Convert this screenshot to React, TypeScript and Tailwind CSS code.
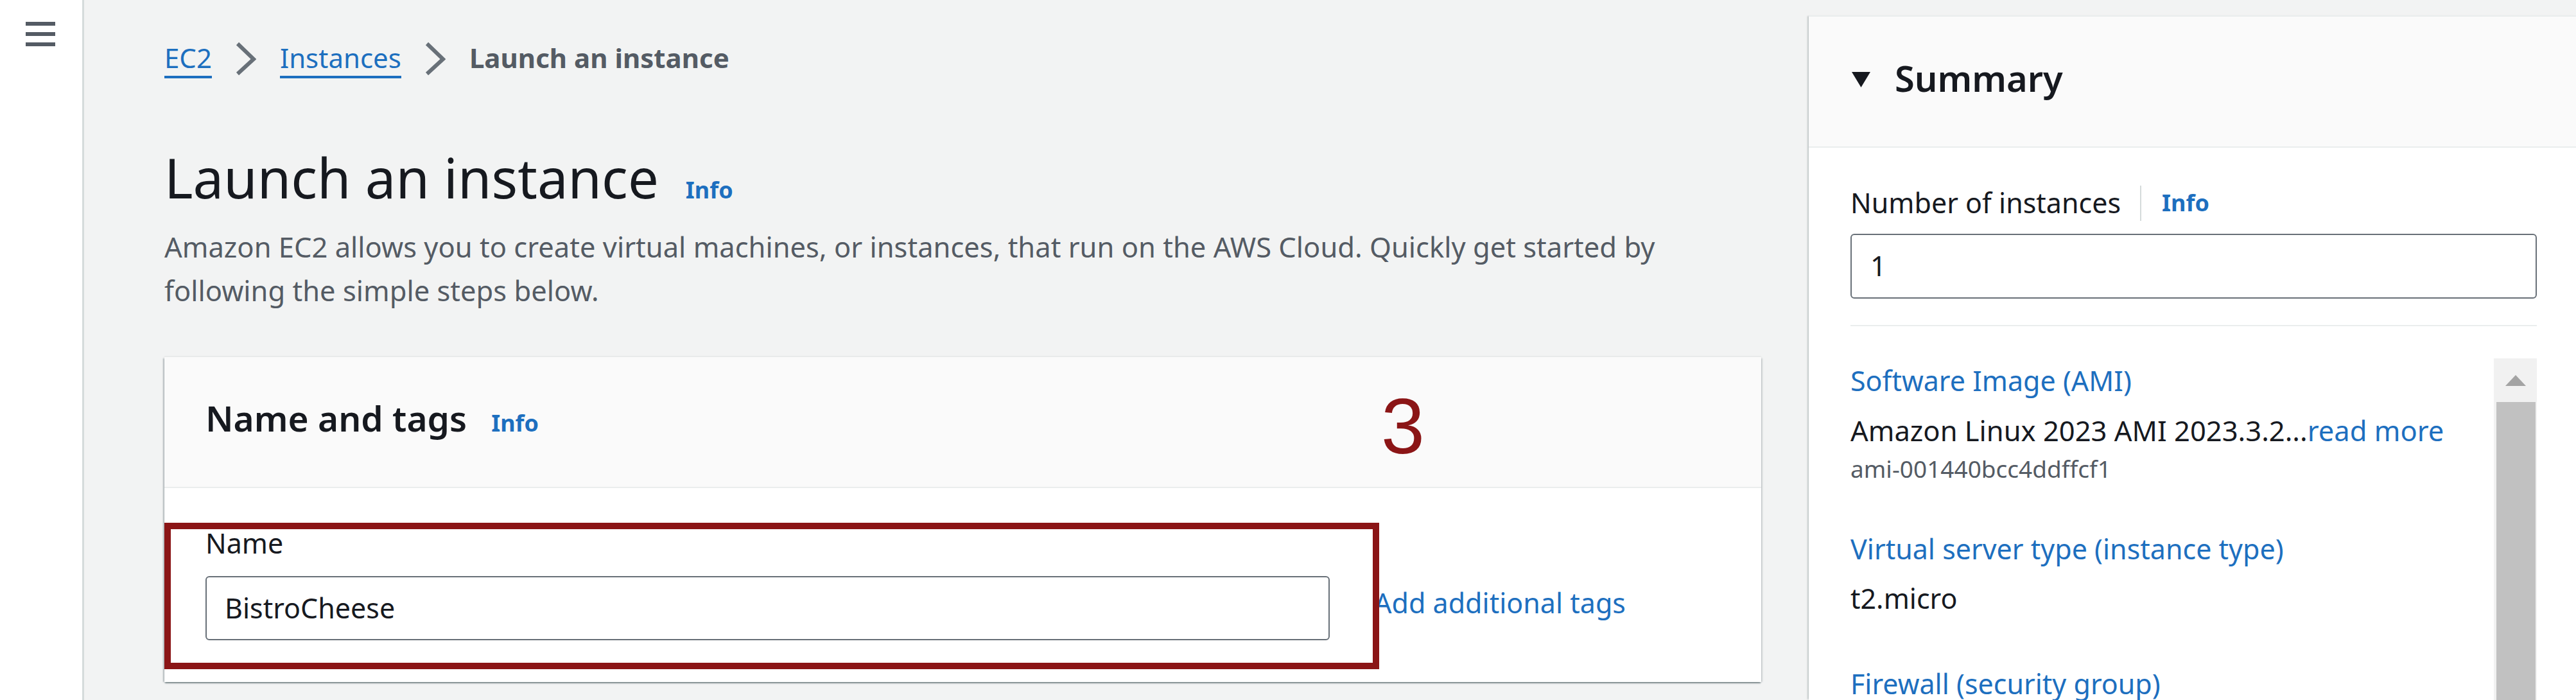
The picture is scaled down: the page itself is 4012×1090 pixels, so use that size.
import React from "react";

const BLUE = "text-[#1d6fbf]";

function Chevron() {
  return (
    <svg width="32" height="53" viewBox="0 0 32 53" className="mt-[3px] shrink-0">
      <polyline points="3,3 28,27 3,50" fill="none" stroke="#687078" strokeWidth="6" strokeLinejoin="miter" />
    </svg>
  );
}

export default function App() {
  return (
    <div className="flex w-[4012px] h-[1090px] overflow-hidden bg-[#f2f3f3] font-['Noto_Sans',sans-serif] text-[#16191f]">
      {/* Left nav */}
      <aside className="w-[131px] shrink-0 bg-white border-r-[3px] border-[#d5dbdb] pt-[34px] pl-[40px]">
        <div className="flex flex-col gap-[10px] w-[46px]">
          <div className="h-[6px] bg-[#545b64]" />
          <div className="h-[6px] bg-[#545b64]" />
          <div className="h-[6px] bg-[#545b64]" />
        </div>
      </aside>

      {/* Main column */}
      <main className="w-[2686px] shrink-0 pl-[125px]">
        <div className="w-[2487px]">
          {/* Breadcrumb */}
          <nav className="mt-[62px] h-[60px] flex items-start gap-[37px] text-[42px]">
            <span className={`leading-[56px] border-b-[4px] border-[#1d6fbf] ${BLUE}`}>EC2</span>
            <Chevron />
            <span className={`leading-[56px] border-b-[4px] border-[#1d6fbf] ${BLUE}`}>Instances</span>
            <Chevron />
            <span className="leading-[56px] font-bold text-[#545b64]">Launch an instance</span>
          </nav>

          {/* Heading */}
          <h1 className="mt-[104px] flex items-baseline">
            <span className="text-[85px] leading-[100px] font-normal text-[#16191f]">Launch an instance</span>
            <span className={`ml-[42px] text-[36px] font-bold ${BLUE}`}>Info</span>
          </h1>
          <p className="mt-[24px] text-[43.5px] leading-[68px] text-[#545b64]">
            Amazon EC2 allows you to create virtual machines, or instances, that run on the AWS Cloud. Quickly get started by
            <br />
            following the simple steps below.
          </p>

          {/* Card */}
          <section className="relative mt-[70px] bg-white shadow-[0_3px_2px_-1px_rgba(0,28,36,0.45),-3px_1px_2px_-1px_rgba(0,28,36,0.25),3px_1px_2px_-1px_rgba(0,28,36,0.15),0_-1px_2px_0_rgba(0,28,36,0.08)]">
            <div className="bg-[#fafafa] border-b-2 border-[#eaeded] pl-[64px] pt-[60px] pb-[72px] flex items-baseline">
              <h2 className="text-[55px] leading-[70px] font-semibold text-[#16191f]">Name and tags</h2>
              <span className={`ml-[38px] text-[36px] font-bold ${BLUE}`}>Info</span>
            </div>
            <div className="px-[64px] pt-[56px] pb-[65px]">
              <div className="text-[43px] leading-[60px] text-[#16191f]">Name</div>
              <div className="mt-[21px] flex items-center gap-[69px]">
                <div className="w-[1751px] h-[100px] border-2 border-[#687078] rounded-[6px] pl-[28px] flex items-center text-[43px] text-[#16191f] bg-white">
                  BistroCheese
                </div>
                <span className={`mb-[16px] text-[43px] ${BLUE}`}>Add additional tags</span>
              </div>
            </div>

            {/* Annotation overlays */}
            <span className="absolute left-[1895px] top-[47px] text-[122px] leading-none font-['Liberation_Sans',sans-serif] text-[#8b1516]">
              3
            </span>
            <div className="pointer-events-none absolute left-0 top-[258px] w-[1892px] h-[228px] border-[10px] border-[#8b1516]" />
          </section>
        </div>
      </main>

      {/* Summary panel */}
      <aside className="w-[1195px] shrink-0 mt-[24px] bg-white border-t-2 border-[#eaeded] shadow-[-3px_0_2px_-1px_rgba(0,28,36,0.2)]">
        <div className="bg-[#fafafa] border-b-2 border-[#eaeded] pl-[67px] pt-[60px] pb-[72px] flex items-center">
          <svg width="29" height="24" viewBox="0 0 29 24" className="mt-[6px] shrink-0">
            <polygon points="0,0 29,0 14.5,24" fill="#16191f" />
          </svg>
          <h2 className="ml-[38px] text-[56px] leading-[70px] font-semibold text-[#16191f]">Summary</h2>
        </div>
        <div className="pl-[65px] pr-[61px] pt-[56px]">
          <div className="flex items-center h-[60px]">
            <span className="text-[43px] leading-[60px] text-[#16191f]">Number of instances</span>
            <span className="ml-[30px] h-[55px] border-l-2 border-[#d5dbdb]" />
            <span className={`ml-[32px] text-[36px] leading-[60px] font-bold ${BLUE}`}>Info</span>
          </div>
          <div className="mt-[18px] h-[101px] w-full border-2 border-[#687078] rounded-[6px] pl-[29px] flex items-center text-[43px] text-[#16191f]">
            1
          </div>
          <div className="mt-[41px] h-[2px] bg-[#eaeded]" />

          <div className="mt-[50px] flex h-[600px]">
            <div className="flex-1 pt-[5px]">
              <div className={`text-[43px] leading-[60px] ${BLUE}`}>Software Image (AMI)</div>
              <div className="mt-[17px] text-[43.5px] leading-[60px] text-[#16191f]">
                Amazon Linux 2023 AMI 2023.3.2...<span className={BLUE}>read more</span>
              </div>
              <div className="mt-[5px] text-[37px] leading-[50px] text-[#545b64]">ami-001440bcc4ddffcf1</div>
              <div className={`mt-[70px] text-[43px] leading-[60px] ${BLUE}`}>Virtual server type (instance type)</div>
              <div className="mt-[17px] text-[43px] leading-[60px] text-[#16191f]">t2.micro</div>
              <div className={`mt-[73px] text-[43px] leading-[60px] ${BLUE}`}>Firewall (security group)</div>
            </div>
            <div className="w-[67px] shrink-0 bg-[#f1f1f1] flex flex-col">
              <div className="h-[68px] flex items-center justify-center">
                <svg width="32" height="17" viewBox="0 0 32 17">
                  <polygon points="16,0 32,17 0,17" fill="#a3a3a3" />
                </svg>
              </div>
              <div className="flex-1 ml-[4px] mr-[2px] bg-[#c1c1c1]" />
            </div>
          </div>
        </div>
      </aside>
    </div>
  );
}
